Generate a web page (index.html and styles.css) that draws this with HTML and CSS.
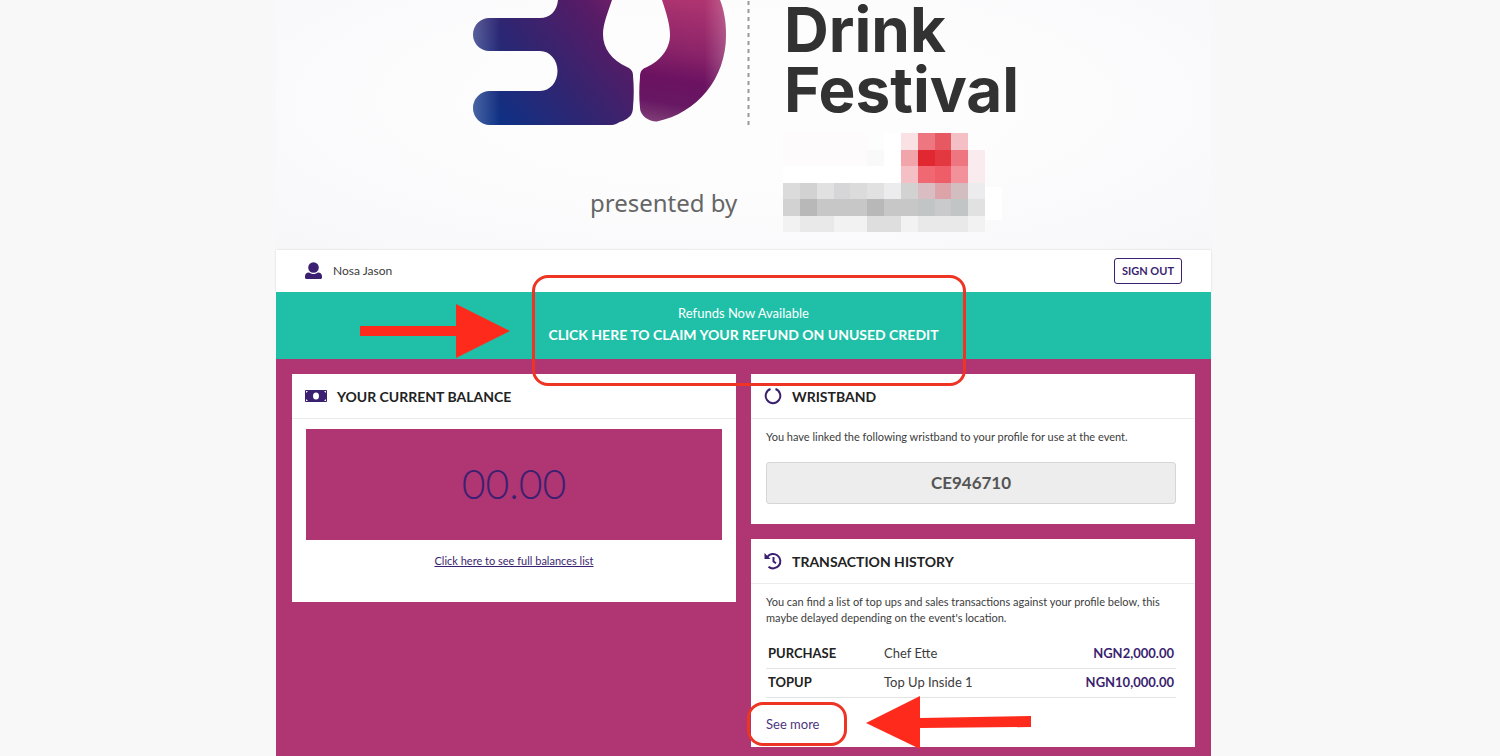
FILE: index.html
```html
<!DOCTYPE html>
<html lang="en">

<head>
    <meta charset="UTF-8">
    <meta name="viewport" content="width=device-width, initial-scale=1.0">
    <title>My Account</title>
    <link rel="stylesheet" href="styles.css">
</head>

<body>

    <div class="page">

        <header class="banner">
            <div class="banner-top">
                <svg class="logo" width="253" height="126" viewBox="0 0 253 126" aria-hidden="true">
                    <defs>
                        <linearGradient id="body" gradientUnits="userSpaceOnUse" x1="10" y1="110" x2="150" y2="-10">
                            <stop offset="0" stop-color="#0c3185" />
                            <stop offset="0.45" stop-color="#35246f" />
                            <stop offset="0.8" stop-color="#581b66" />
                            <stop offset="1" stop-color="#7a2268" />
                        </linearGradient>
                        <linearGradient id="bowl" gradientUnits="userSpaceOnUse" x1="215" y1="0" x2="195" y2="122">
                            <stop offset="0" stop-color="#ae3470" />
                            <stop offset="0.4" stop-color="#8c2469" />
                            <stop offset="0.65" stop-color="#6b1261" />
                            <stop offset="0.85" stop-color="#671763" />
                            <stop offset="1" stop-color="#7d3a74" />
                        </linearGradient>
                        <linearGradient id="shine" x1="0" y1="0" x2="1" y2="0">
                            <stop offset="0" stop-color="#fff" stop-opacity="0.25" />
                            <stop offset="0.17" stop-color="#fff" stop-opacity="0" />
                        </linearGradient>
                        <linearGradient id="edge" x1="0" y1="0" x2="1" y2="0">
                            <stop offset="0.75" stop-color="#fff" stop-opacity="0" />
                            <stop offset="1" stop-color="#fff" stop-opacity="0.2" />
                        </linearGradient>
                        <path id="left" d="M85 0C84 11 77 18 67 18H16.500A16.500 16.500 0 0 0 16.500 51H67C77 51 84.500 60 84.500 71S77 91 67 91H17A17 17 0 0 0 17 125H139C143 125 145 122 150 121C156 118 160 115 160 107C161 96 161 86 160 76C160 71 158 69 154 67C139 60 130 49 130 34C130 24 135 12 139 0Z" />
                        <path id="right" d="M189 0C193 12 197 24 197 35C197 49 187 61 174 67C169 69 167 71 167 77C166 88 166 98 167 108C167 116 177 122 184 121.500C224 113 253 79 253 35C253 22 251 10 247 0Z" />
                    </defs>
                    <use href="#left" fill="url(#body)" />
                    <use href="#left" fill="url(#shine)" />
                    <use href="#right" fill="url(#bowl)" />
                    <use href="#right" fill="url(#edge)" />
                </svg>
                <svg class="divider" width="3" height="126" viewBox="0 0 3 126" aria-hidden="true">
                    <path d="M1.500 1V125" stroke="#999" stroke-width="2" stroke-dasharray="4 4" />
                </svg>
                <h1 class="title">Drink<br>Festival</h1>
            </div>
            <div class="banner-bottom">
                <span class="presented">presented by</span>
                <svg class="sponsor" width="219" height="99" viewBox="0 0 13 6" preserveAspectRatio="none" shape-rendering="crispEdges" aria-hidden="true">
                    <path fill="#fff" d="M0 2h7v1H0zM6 0h1v2H6zM12 3.300h1v2h-1z" />
                    <path fill="#fdfbfc" d="M0 0h5v2H0z" />
                    <path fill="#f9f9fa" d="M5 1h1v1H5z" />
                    <path fill="#f9e1e4" d="M7 0h1v1H7z" />
                    <path fill="#ed7680" d="M8 0h1v1H8zM10 1h1v1h-1z" />
                    <path fill="#e65962" d="M9 0h1v1H9z" />
                    <path fill="#f4c0c6" d="M10 0h1v1h-1zM7 2h1v1H7z" />
                    <path fill="#f1a4aa" d="M7 1h1v1H7z" />
                    <path fill="#e12831" d="M8 1h1v1H8z" />
                    <path fill="#e33840" d="M9 1h1v1H9z" />
                    <path fill="#faecee" d="M11 1h1v2h-1z" />
                    <path fill="#ef6872" d="M8 2h1v1H8z" />
                    <path fill="#ee5d68" d="M9 2h1v1H9z" />
                    <path fill="#f3919a" d="M10 2h1v1h-1z" />
                    <path fill="#dbdbdc" d="M0 3h1v1H0zM4 3h1v1H4z" />
                    <path fill="#d2d2d3" d="M1 3h1v1H1zM7 3h1v1H7zM0 4h1v1H0z" />
                    <path fill="#e1e1e2" d="M2 3h1v1H2zM5 3h1v1H5zM11 4h1v1h-1z" />
                    <path fill="#d6d6d8" d="M3 3h1v1H3z" />
                    <path fill="#ececee" d="M6 3h1v1H6zM11 3h1v1h-1z" />
                    <path fill="#d9bdc2" d="M8 3h1v1H8z" />
                    <path fill="#dca4a9" d="M9 3h1v1H9z" />
                    <path fill="#d2bec1" d="M10 3h1v1h-1z" />
                    <path fill="#b8b8b8" d="M1 4h1v1H1zM5 4h1v1H5z" />
                    <path fill="#c7c7c8" d="M2 4h3v1H2zM6 4h2v1H6z" />
                    <path fill="#c1c5c6" d="M8 4h1v1H8zM10 4h1v1h-1z" />
                    <path fill="#c9cacb" d="M9 4h1v1H9z" />
                    <path fill="#f2f2f3" d="M0 5h1v1H0zM3 5h2v1H3zM7 5h1v1H7zM11 5h1v1h-1z" />
                    <path fill="#e9e9ea" d="M1 5h2v1H1zM8 5h3v1H8z" />
                    <path fill="#dedede" d="M5 5h2v1H5z" />
                </svg>
            </div>
        </header>

        <div class="userbar">
            <svg class="user-icon" width="17" height="17" viewBox="0 0 17 17" aria-hidden="true">
                <circle cx="8.500" cy="5.500" r="5.300" />
                <path d="M4 10.500C5.200 11.400 6.800 12 8.500 12S11.800 11.400 13 10.500C15.500 10.500 17 12 17 14.200V15.500C17 16.400 16.400 17 15.500 17H1.500C0.600 17 0 16.400 0 15.500V14.200C0 12 1.500 10.500 4 10.500Z" />
            </svg>
            <span class="user-name">Nosa Jason</span>
            <button class="sign-out" type="button">SIGN OUT</button>
        </div>

        <div class="refund">
            <a class="refund-link" href="#refund">
                <span class="refund-note">Refunds Now Available</span>
                <span class="refund-action">CLICK HERE TO CLAIM YOUR REFUND ON UNUSED CREDIT</span>
            </a>
            <div class="mark mark-refund"></div>
            <svg class="arrow arrow-refund" width="151" height="54" viewBox="0 0 151 54" aria-hidden="true">
                <path d="M0 22H96V0L150 27L96 54V32H0Z" />
            </svg>
        </div>

        <main class="content">
            <section class="card">
                <h2 class="card-title">
                    <svg class="icon" width="22" height="12" viewBox="0 0 22 12" aria-hidden="true">
                        <rect width="22" height="12" rx="1" />
                        <ellipse cx="11" cy="6" rx="3" ry="3.500" fill="#fff" />
                        <path fill="#fff" d="M1 1h2L1 3zM21 1v2L19 1zM1 11V9L3 11zM21 11h-2L21 9z" />
                    </svg>
                    YOUR CURRENT BALANCE
                </h2>
                <div class="balance-body">
                    <div class="balance">00.00</div>
                    <a class="balance-link" href="#balances">Click here to see full balances list</a>
                </div>
            </section>

            <div class="column">
                <section class="card">
                    <h2 class="card-title">
                        <svg class="icon" width="18" height="18" viewBox="0 0 18 18" aria-hidden="true">
                            <path class="line" d="M6.500 2A7.300 7.300 0 1 0 11.500 2" />
                        </svg>
                        WRISTBAND
                    </h2>
                    <div class="card-body">
                        <p class="text">You have linked the following wristband to your profile for use at the event.</p>
                        <div class="wristband">CE946710</div>
                    </div>
                </section>

                <section class="card">
                    <h2 class="card-title">
                        <svg class="icon" width="18" height="18" viewBox="0 0 18 18" aria-hidden="true">
                            <path class="line" d="M3.300 5A7.200 7.200 0 1 1 4.500 14.700" />
                            <path d="M0.500 1V7H6.500Z" />
                            <path class="line" d="M9.500 5V9.500L12 11.300" />
                        </svg>
                        TRANSACTION HISTORY
                    </h2>
                    <div class="card-body history">
                        <p class="text">You can find a list of top ups and sales transactions against your profile below, this maybe delayed depending on the event's location.</p>
                        <table class="transactions">
                            <tbody>
                                <tr>
                                    <th scope="row">PURCHASE</th>
                                    <td>Chef Ette</td>
                                    <td class="amount">NGN2,000.00</td>
                                </tr>
                                <tr>
                                    <th scope="row">TOPUP</th>
                                    <td>Top Up Inside 1</td>
                                    <td class="amount">NGN10,000.00</td>
                                </tr>
                            </tbody>
                        </table>
                        <div class="more">
                            <a class="more-link" href="#history">See more</a>
                            <div class="mark mark-more"></div>
                            <svg class="arrow arrow-more" width="166" height="53" viewBox="0 0 166 53" aria-hidden="true">
                                <path d="M0 27L54 0V22L165 20V31L54 32V53Z" />
                            </svg>
                        </div>
                    </div>
                </section>
            </div>
        </main>

    </div>

</body>
</html>
```
FILE: styles.css
```css
* {
    box-sizing: border-box;
}

body {
    font-family: Lato, "Open Sans", sans-serif;
    background-color: #f8f8f8;
    color: #3c3c3c;
    margin: 0;
    padding-right: 13px;
}

h1, h2, p {
    margin: 0;
}

.page {
    max-width: 935px;
    min-height: 100vh;
    margin: 0 auto;
    display: flex;
    flex-direction: column;
    background-color: #af3573;
}

/* banner */

.banner {
    height: 250px;
    padding-left: 197px;
    background: radial-gradient(ellipse at 50% 40%, #fdfdfe 40%, #f7f7f9 100%);
}

.banner-top {
    display: flex;
    height: 126px;
}

.divider {
    margin-left: 21px;
    fill: none;
}

.title {
    margin-left: 34px;
    color: #323232;
    font-family: Inter, sans-serif;
    font-size: 62px;
    line-height: 60px;
    font-weight: 700;
}

.banner-bottom {
    display: flex;
    align-items: flex-end;
    gap: 43px;
    padding: 7px 0 0 117px;
}

.presented {
    width: 150px;
    padding-bottom: 12px;
    color: #666;
    font-family: "Noto Sans", sans-serif;
    font-size: 24px;
    line-height: 34px;
    white-space: nowrap;
}

/* user bar */

.userbar {
    display: flex;
    align-items: center;
    height: 42px;
    padding: 0 29px 2px;
    background-color: #fff;
    box-shadow: 0 0 2px rgba(0, 0, 0, 0.15);
}

.user-icon {
    margin-right: 11px;
    fill: #3b1f70;
}

.user-name {
    font-size: 12px;
}

.sign-out {
    margin: 2px 0 0 auto;
    height: 26px;
    padding: 0 7px 2px;
    border: 1px solid #3b1f70;
    border-radius: 3px;
    background-color: #fff;
    color: #3b1f70;
    font-family: inherit;
    font-size: 11px;
    font-weight: 700;
    cursor: pointer;
}

/* refund */

.refund {
    position: relative;
    height: 67px;
    padding-top: 11px;
    background-color: #20bfa7;
    text-align: center;
}

.refund-link {
    color: #fff;
    text-decoration: none;
}

.refund-note {
    display: block;
    font-size: 13px;
    line-height: 20px;
}

.refund-action {
    display: block;
    font-size: 14px;
    line-height: 24px;
    font-weight: 700;
}

/* highlights */

.mark {
    position: absolute;
    border: 3px solid #ee3524;
    border-radius: 16px;
    pointer-events: none;
    z-index: 1;
}

.mark-refund {
    top: -17px;
    left: 50%;
    width: 434px;
    height: 111px;
    margin-left: -212px;
}

.mark-more {
    top: -14px;
    left: -19px;
    width: 100px;
    height: 44px;
}

.arrow {
    position: absolute;
    fill: #fe2a1c;
}

.arrow-refund {
    top: 12px;
    left: 84px;
}

.arrow-more {
    top: -20px;
    left: 100px;
}

/* cards */

.content {
    display: grid;
    grid-template-columns: 1fr 1fr;
    gap: 15px;
    align-items: start;
    padding: 15px 16px 9px;
}

.column {
    display: grid;
    gap: 15px;
}

.card {
    background-color: #fff;
}

.card-title {
    display: flex;
    align-items: center;
    gap: 10px;
    height: 45px;
    padding: 0 13px;
    border-bottom: 1px solid #ececec;
    color: #222;
    font-size: 14px;
    font-weight: 700;
}

.icon {
    fill: #3b1f70;
}

.icon .line {
    fill: none;
    stroke: #3b1f70;
    stroke-width: 2;
}

.balance-body {
    padding: 10px 14px 33px;
    text-align: center;
}

.balance {
    height: 111px;
    margin-bottom: 13px;
    background-color: #af3573;
    color: #3b1f70;
    font-size: 41px;
    line-height: 110px;
    font-weight: 300;
}

.balance-link {
    display: block;
    color: #3b1f70;
    font-size: 11px;
    line-height: 16px;
}

.card-body {
    padding: 10px 19px 20px 15px;
}

.text {
    font-size: 11px;
    line-height: 16px;
}

.wristband {
    height: 42px;
    margin-top: 17px;
    border: 1px solid #d6d6d6;
    border-radius: 3px;
    background-color: #ededed;
    color: #555;
    font-size: 17px;
    line-height: 40px;
    font-weight: 700;
    text-align: center;
}

.history {
    padding-bottom: 15px;
}

.transactions {
    width: 100%;
    margin-top: 13px;
    border-collapse: collapse;
    font-size: 13px;
}

.transactions th,
.transactions td {
    height: 29px;
    padding: 0 2px 1px;
    border-bottom: 1px solid #e4e4e4;
    text-align: left;
}

.transactions th {
    width: 116px;
    color: #222;
}

.transactions .amount {
    color: #3b1f70;
    font-weight: 700;
    text-align: right;
}

.more {
    position: relative;
    margin-top: 18px;
    height: 16px;
}

.more-link {
    display: block;
    color: #4f3480;
    font-size: 13px;
    line-height: 16px;
    text-decoration: none;
}
```
